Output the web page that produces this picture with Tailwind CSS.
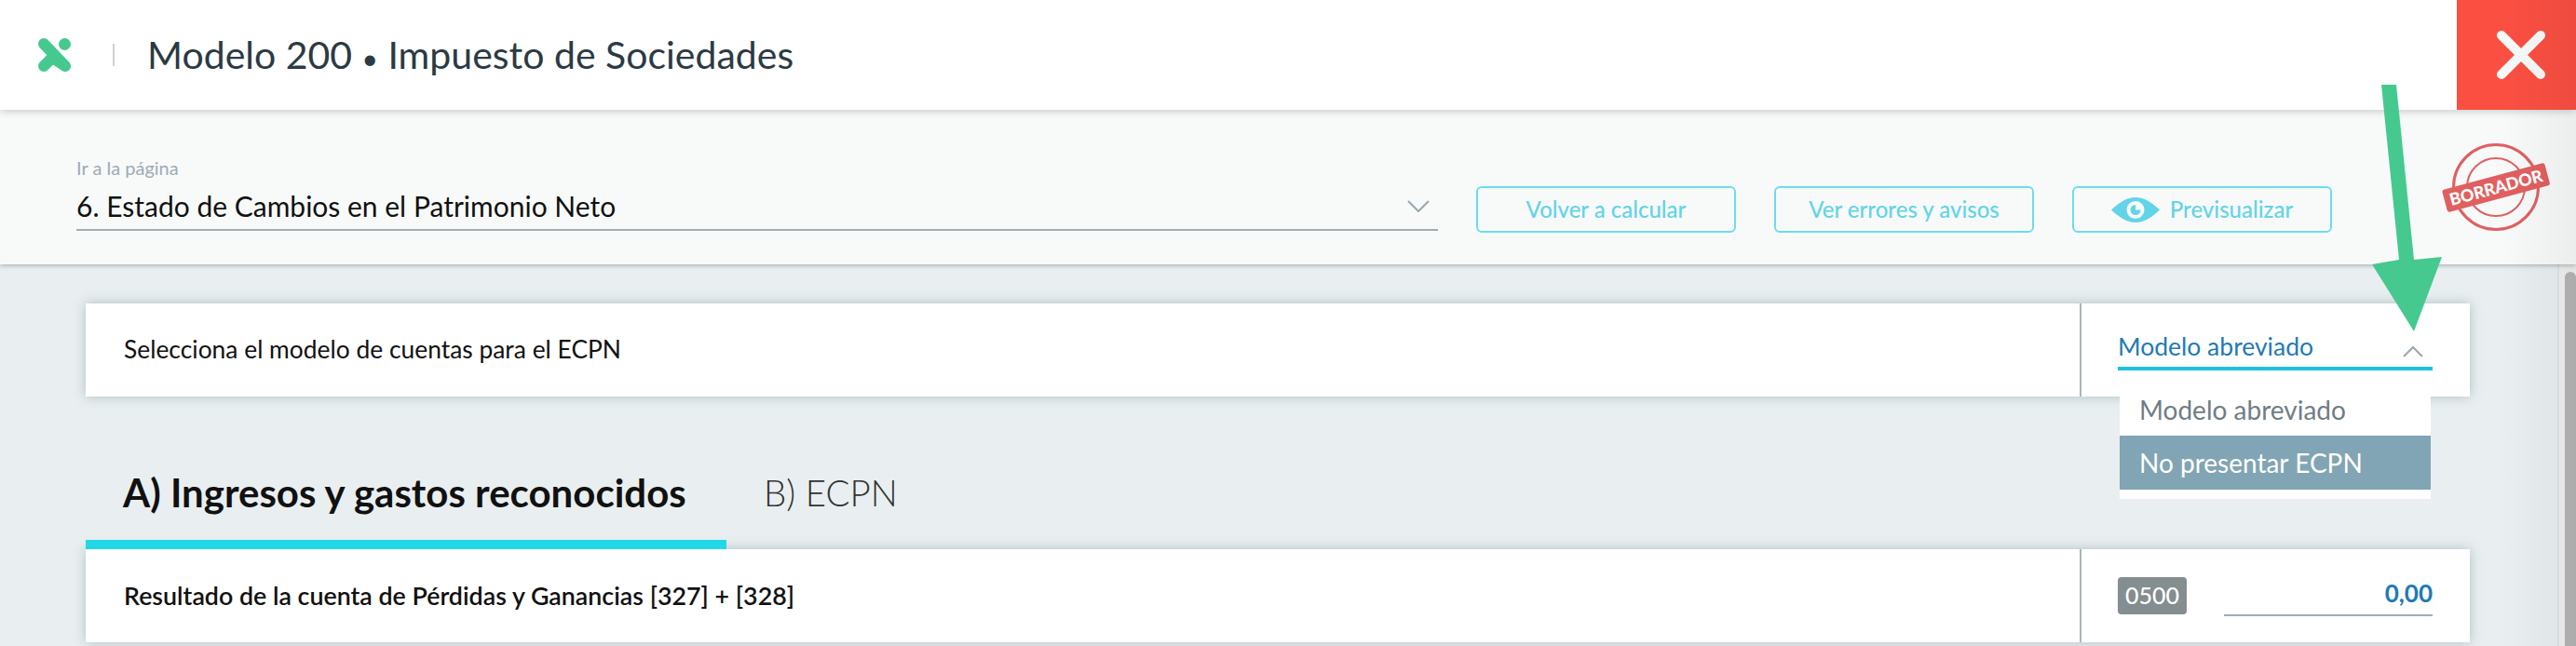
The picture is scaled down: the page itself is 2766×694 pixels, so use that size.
<!DOCTYPE html>
<html lang="es">
<head>
    <meta charset="UTF-8">
    <title>Modelo 200</title>
    <script src="https://cdn.jsdelivr.net/npm/@tailwindcss/browser@4"></script>
</head>
<body class="relative w-[2766px] h-[694px] overflow-hidden bg-[#e9eff0] font-['Lato','Noto_Sans',sans-serif]">

    <!-- Barra superior -->
    <header class="relative z-20 flex h-[118px] items-center bg-white shadow-[0_2px_8px_rgba(0,0,0,0.18)]">
        <svg class="ml-[41px] w-[35px] h-[36px]" viewBox="0 0 35 36">
            <path d="M6 6 L28 29 M6 30 L17 19" stroke="#45c98e" stroke-width="12" stroke-linecap="round" fill="none"/>
            <path d="M17 22 L29 30" stroke="#45c98e" stroke-width="12" stroke-linecap="round" fill="none"/>
            <circle cx="28.500" cy="6.500" r="6.500" fill="#45c98e"/>
        </svg>
        <div class="ml-[45px] w-[2px] h-[24px] bg-[#d0d0d0]"></div>
        <h1 class="ml-[35px] text-[41px] text-[#2b3a44] whitespace-nowrap">Modelo 200 <span class="text-[30px]">•</span> Impuesto de Sociedades</h1>
        <button class="ml-auto flex h-full w-[128px] items-center justify-center bg-[#fb4f42] pl-[10px]">
            <svg class="w-[52px] h-[52px]" viewBox="0 0 52 52">
                <path d="M5 5 L47 47 M47 5 L5 47" stroke="#f8fafa" stroke-width="10" stroke-linecap="round"/>
            </svg>
        </button>
    </header>

    <!-- Barra de acciones -->
    <section class="relative z-10 flex h-[166px] items-start bg-[#f8fafa] pl-[82px] shadow-[0_1px_5px_rgba(0,0,0,0.3)]">
        <div class="w-[1462px] pt-[50px]">
            <div class="text-[20px] leading-[24px] text-[#9dabb4]">Ir a la página</div>
            <div class="mt-[11px] flex h-[45px] items-center justify-between border-b-2 border-[#a0adb5] pb-[6px]">
                <span class="text-[30px] text-[#111]">6. Estado de Cambios en el Patrimonio Neto</span>
                <svg class="mr-[9px] w-[24px] h-[13px]" viewBox="0 0 24 13"><path d="M1 1 L12 12 L23 1" stroke="#9aa7ae" stroke-width="2" fill="none"/></svg>
            </div>
        </div>
        <div class="ml-[41px] mt-[82px] flex gap-[41px]">
            <button class="h-[50px] w-[279px] rounded-[6px] border-2 border-[#6ddcef] text-[24px] font-medium text-[#62d4e8]">Volver a calcular</button>
            <button class="h-[50px] w-[279px] rounded-[6px] border-2 border-[#6ddcef] text-[24px] font-medium text-[#62d4e8]">Ver errores y avisos</button>
            <button class="flex h-[50px] w-[279px] items-center justify-center gap-[11px] rounded-[6px] border-2 border-[#6ddcef] text-[24px] font-medium text-[#62d4e8]">
                <svg class="w-[52px] h-[27px]" viewBox="0 0 52 27">
                    <path d="M0 13.500 C10 4 18 0 26 0 C34 0 42 4 52 13.500 C42 23 34 27 26 27 C18 27 10 23 0 13.500 Z" fill="#62d4e8"/>
                    <circle cx="26" cy="13.500" r="9.500" fill="#f8fafa"/>
                    <path d="M26 8 A5.500 5.500 0 1 0 31.500 13.500 L26 13.500 Z" fill="#62d4e8"/>
                </svg>
                Previsualizar
            </button>
        </div>
        <!-- Sello -->
        <svg class="absolute left-[2620px] top-[33px] w-[120px] h-[100px]" viewBox="0 0 120 100">
            <circle cx="60" cy="50" r="45.500" fill="none" stroke="#e06060" stroke-width="3"/>
            <circle cx="60" cy="50" r="31" fill="none" stroke="#e06060" stroke-width="2"/>
            <g transform="rotate(-15 60 50)">
                <rect x="3" y="38" width="114" height="25" rx="3" fill="#e06060"/>
                <text x="60" y="57" text-anchor="middle" fill="#fff" font-size="18" font-weight="900" font-family="Lato">BORRADOR</text>
            </g>
        </svg>
    </section>

    <!-- Contenido -->
    <main class="pl-[92px] pr-[114px] pt-[42px]">
        <div class="flex h-[100px] bg-white shadow-[0_0_12px_rgba(90,115,125,0.4)]">
            <div class="flex flex-1 items-center pl-[41px] text-[26.400px] text-[#111]">Selecciona el modelo de cuentas para el ECPN</div>
            <div class="relative w-[419px] border-l-2 border-[#a9b5b8] pl-[39px] pr-[40px]">
                <div class="flex h-[72px] items-end justify-between border-b-4 border-[#1fc0de] pb-[1px]">
                    <span class="text-[26.500px] text-[#1f7ab5]">Modelo abreviado</span>
                    <svg class="mb-[9px] mr-[10px] w-[22px] h-[13px]" viewBox="0 0 22 13"><path d="M1 12 L11 2 L21 12" stroke="#9aa7ae" stroke-width="2" fill="none"/></svg>
                </div>
                <ul class="absolute left-[41px] top-[72px] z-10 w-[334px] bg-white pb-[10px] text-[28px]">
                    <li class="flex h-[70px] items-center pl-[21px] pt-[14px] text-[#6f7d83]">Modelo abreviado</li>
                    <li class="flex h-[58px] items-center bg-[#81a5b4] pl-[21px] text-white">No presentar ECPN</li>
                </ul>
            </div>
        </div>

        <nav class="mt-[70px] flex h-[94px]">
            <div class="w-[688px] border-b-[10px] border-[#22d8e8] pl-[40px] text-[42px] leading-[66px] font-bold text-[#111]">A) Ingresos y gastos reconocidos</div>
            <div class="pl-[40px] text-[38.500px] leading-[66px] font-light text-[#333]">B) ECPN</div>
        </nav>

        <div class="flex h-[100px] bg-white shadow-[0_0_12px_rgba(90,115,125,0.4)]">
            <div class="flex flex-1 items-center pl-[41px] text-[26.800px] font-semibold text-[#111]">Resultado de la cuenta de Pérdidas y Ganancias [327] + [328]</div>
            <div class="flex w-[419px] items-start border-l-2 border-[#a9b5b8] pl-[39px] pr-[40px] pt-[30px]">
                <span class="flex h-[40px] w-[74px] items-center justify-center rounded-[4px] bg-[#848d8f] text-[25px] font-medium text-white">0500</span>
                <span class="ml-[40px] h-[42px] flex-1 border-b-2 border-[#a0adb5] text-right text-[26px] font-bold leading-[34px] text-[#1f7ab5]">0,00</span>
            </div>
        </div>
    </main>

    <!-- Barra de scroll -->
    <div class="absolute right-0 top-[284px] z-0 h-[410px] w-[20px] border-l-2 border-[#dfe4e5] bg-[#f0f0f0]">
        <div class="ml-[6px] mt-[8px] h-[402px] w-[12px] rounded-t-full bg-[#b5b5b5]"></div>
    </div>

    <!-- Flecha verde -->
    <svg class="absolute left-[2540px] top-[85px] z-30 w-[90px] h-[280px]" viewBox="0 0 90 280">
        <polygon points="17,6 33,6 52,194 82,191 52,271 7,199 36,194" fill="#45c98e"/>
    </svg>

    <!-- Sombra del borde derecho -->
    <div class="pointer-events-none absolute right-0 top-0 z-40 h-full w-[80px] bg-gradient-to-r from-transparent to-black/5"></div>
</body>
</html>
